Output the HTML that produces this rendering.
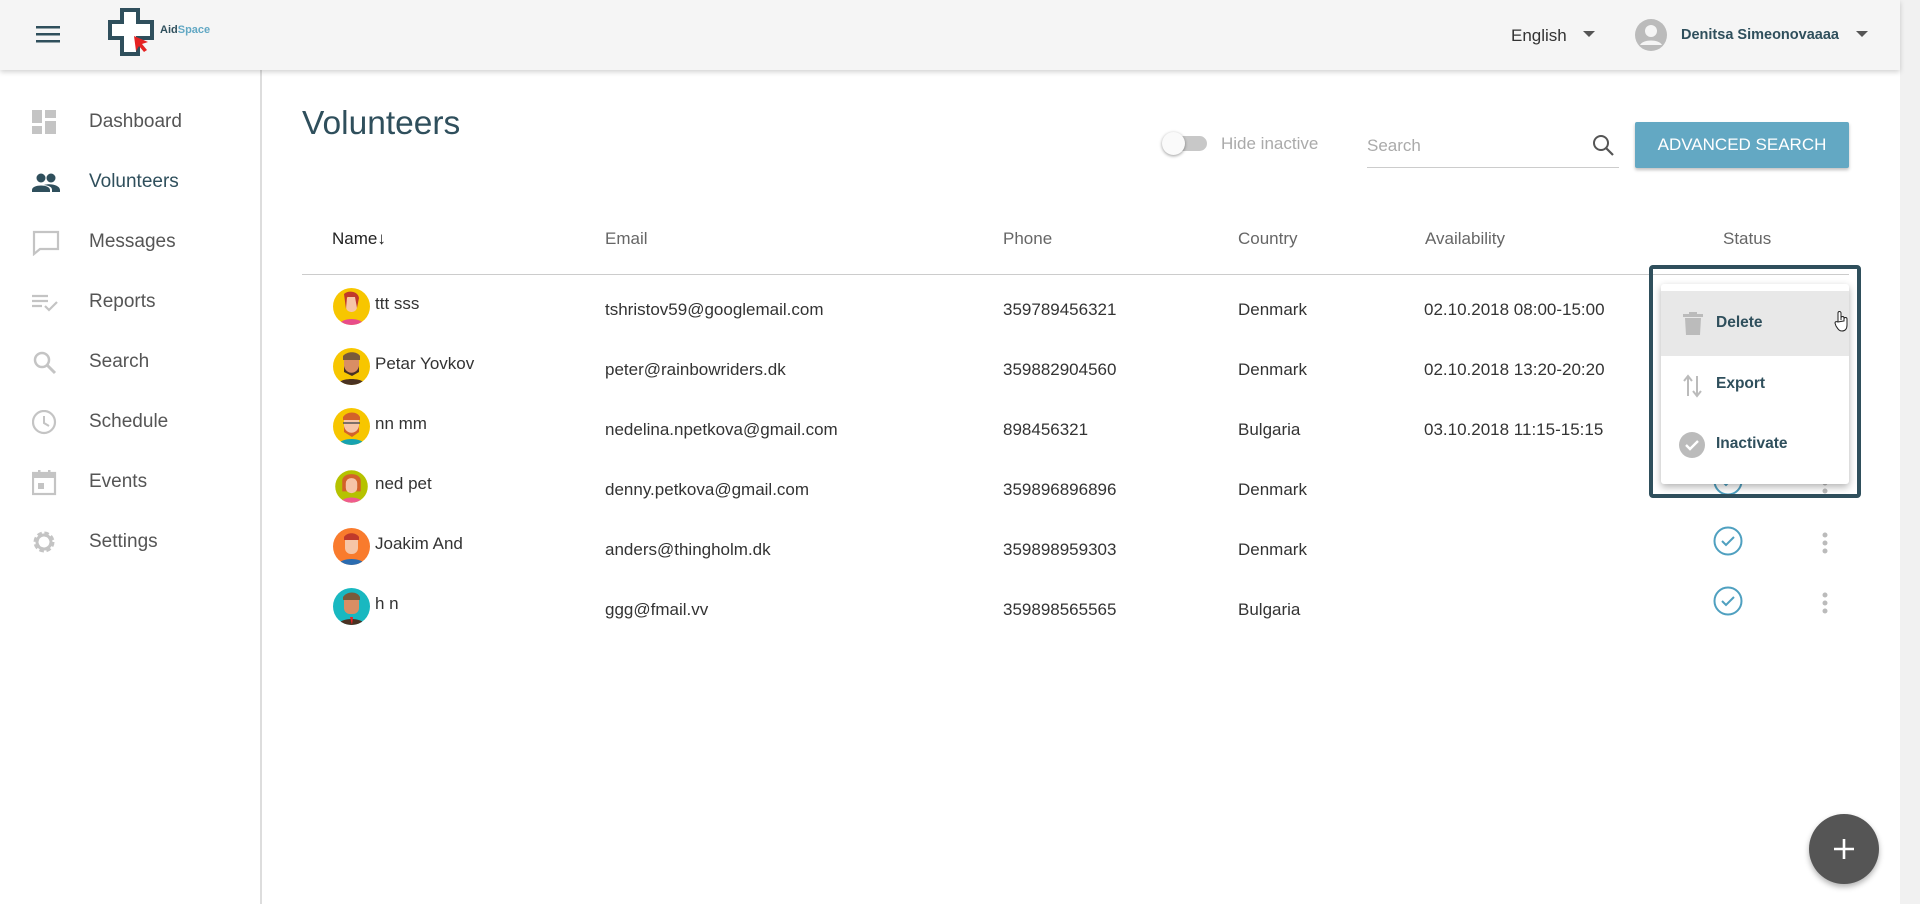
<!DOCTYPE html>
<html><head><meta charset="utf-8"><style>
*{box-sizing:border-box;margin:0;padding:0}
body{width:1920px;height:904px;overflow:hidden;background:#fff;font-family:"Liberation Sans",sans-serif;position:relative;color:#333}
.abs{position:absolute}
.hdr{left:0;top:0;width:1900px;height:70px;background:#f5f5f5;box-shadow:0 2px 5px rgba(0,0,0,.18);z-index:2}
.side{left:0;top:70px;width:262px;height:834px;border-right:2px solid #ddd}
.nav{position:absolute;left:0;width:260px;height:40px;display:flex;align-items:center;font-size:19px;color:#555}
.nav svg{position:absolute;left:32px;top:8px}
.nav span{position:absolute;left:89px}
.th{position:absolute;top:229px;font-size:17px;color:#666}
.row{position:absolute;left:302px;width:1547px;height:60px;font-size:17px;color:#333}
.row div{position:absolute;top:22px}
.av{position:absolute;left:31px!important;top:10px!important;width:37px;height:37px;border-radius:50%;overflow:hidden}
.sb{left:1900px;top:0;width:20px;height:904px;background:#f1f1f1}
</style></head><body>
<div class="abs hdr">
 <svg class="abs" style="left:36px;top:25px" width="24" height="18"><rect y="1" width="24" height="2.5" fill="#2f4f5c"/><rect y="8" width="24" height="2.5" fill="#2f4f5c"/><rect y="15" width="24" height="2.5" fill="#2f4f5c"/></svg>
 <svg class="abs" style="left:108px;top:8px" width="50" height="48"><path d="M14 2h16v12h14v16H30v16H14V30H2V14h12z" fill="#fff" stroke="#2f4f5c" stroke-width="4"/><path d="M26 28l14 6-6 2 5 6-3 2-5-6-3 5z" fill="#e52222"/></svg>
 <div class="abs" style="left:160px;top:24px;font-size:11px;font-weight:bold;color:#2f4f5c">Aid<span style="color:#62a8c4">Space</span></div>
 <div class="abs" style="left:1511px;top:26px;font-size:17px;color:#333">English</div>
 <svg class="abs" style="left:1583px;top:31px" width="12" height="6"><path d="M0 0h12L6 6z" fill="#555"/></svg>
 <svg class="abs" style="left:1634px;top:18px" width="34" height="34"><circle cx="17" cy="17" r="16" fill="#bbb"/><circle cx="17" cy="13" r="6" fill="#f5f5f5"/><path d="M6 27c3-6 19-6 22 0" fill="#f5f5f5"/></svg>
 <div class="abs" style="left:1681px;top:27px;font-size:14.5px;font-weight:bold;color:#2f4f5c">Denitsa Simeonovaaaa</div>
 <svg class="abs" style="left:1856px;top:31px" width="12" height="6"><path d="M0 0h12L6 6z" fill="#555"/></svg>
</div>
<div class="abs side">
 <div class="nav" style="top:32px"><svg width="24" height="24"><path d="M0 0h10v13H0zM13 0h11v8H13zM0 16h10v8H0zM13 11h11v13H13z" fill="#c4c4c4"/></svg><span>Dashboard</span></div>
 <div class="nav" style="top:92px;color:#2f4f5c"><svg width="28" height="24"><circle cx="9" cy="8" r="4.5" fill="#2f4f5c"/><circle cx="19" cy="8" r="4.5" fill="#2f4f5c"/><path d="M0 20c0-6 18-6 18 0v2H0zM12 15c6-2 16 0 16 5v2h-8v-2c0-2-1-4-8-5z" fill="#2f4f5c"/></svg><span>Volunteers</span></div>
 <div class="nav" style="top:152px"><svg width="28" height="26"><path d="M2 2h24v17H8l-6 5z" fill="none" stroke="#c4c4c4" stroke-width="2.2"/></svg><span>Messages</span></div>
 <div class="nav" style="top:212px"><svg width="28" height="24"><path d="M0 6h16M0 11h16M0 16h10" stroke="#c4c4c4" stroke-width="2.2"/><path d="M13 16l4 4 8-8" stroke="#c4c4c4" stroke-width="2.2" fill="none"/></svg><span>Reports</span></div>
 <div class="nav" style="top:272px"><svg width="28" height="26"><circle cx="10" cy="10" r="7" fill="none" stroke="#c4c4c4" stroke-width="2.5"/><path d="M15 15l8 8" stroke="#c4c4c4" stroke-width="3"/></svg><span>Search</span></div>
 <div class="nav" style="top:332px"><svg width="28" height="26"><circle cx="12" cy="12" r="11" fill="none" stroke="#c4c4c4" stroke-width="2.2"/><path d="M12 6v7l5 3" stroke="#c4c4c4" stroke-width="2" fill="none"/></svg><span>Schedule</span></div>
 <div class="nav" style="top:392px"><svg width="28" height="26"><rect x="1" y="3" width="22" height="21" fill="none" stroke="#c4c4c4" stroke-width="2.2"/><rect x="1" y="3" width="22" height="5" fill="#c4c4c4"/><rect x="6" y="0" width="2.5" height="5" fill="#c4c4c4"/><rect x="16" y="0" width="2.5" height="5" fill="#c4c4c4"/><rect x="6" y="13" width="6" height="6" fill="#c4c4c4"/></svg><span>Events</span></div>
 <div class="nav" style="top:452px"><svg width="28" height="26"><circle cx="12" cy="12" r="8" fill="none" stroke="#c4c4c4" stroke-width="5" stroke-dasharray="4 2.3"/><circle cx="12" cy="12" r="7" fill="none" stroke="#c4c4c4" stroke-width="3"/></svg><span>Settings</span></div>
</div>
<div class="abs" style="left:302px;top:105px;font-size:33.5px;color:#2f4f5c">Volunteers</div>
<div class="abs" style="left:1165px;top:136px;width:42px;height:15px;border-radius:8px;background:#c8c8c8"></div>
<div class="abs" style="left:1162px;top:132px;width:23px;height:23px;border-radius:50%;background:#fafafa;box-shadow:0 1px 3px rgba(0,0,0,.4)"></div>
<div class="abs" style="left:1221px;top:134px;font-size:17px;color:#aaa">Hide inactive</div>
<div class="abs" style="left:1367px;top:136px;font-size:17px;color:#aaa">Search</div>
<svg class="abs" style="left:1592px;top:134px" width="24" height="24"><circle cx="9" cy="9" r="7" fill="none" stroke="#555" stroke-width="2"/><path d="M14 14l7 7" stroke="#555" stroke-width="2.2"/></svg>
<div class="abs" style="left:1367px;top:167px;width:252px;height:1px;background:#ccc"></div>
<div class="abs" style="left:1635px;top:122px;width:214px;height:46px;background:#63a8c3;border-radius:2px;box-shadow:0 2px 3px rgba(0,0,0,.25);color:#fff;font-size:17px;text-align:center;line-height:46px">ADVANCED SEARCH</div>
<div class="th" style="left:332px;color:#222">Name&#8595;</div>
<div class="th" style="left:605px">Email</div>
<div class="th" style="left:1003px">Phone</div>
<div class="th" style="left:1238px">Country</div>
<div class="th" style="left:1425px">Availability</div>
<div class="th" style="left:1723px">Status</div>
<div class="abs" style="left:302px;top:274px;width:1547px;height:1px;background:#ccc"></div>

<div class="row" style="top:278px"><span class="av" style="background:#f7c600"><svg width="37" height="37"><rect x="13" y="8" width="11" height="16" rx="5" fill="#f6c5a7"/><path d="M11 6c4-4 14-3 15 4l-2 10-2-11h-8l-1 12z" fill="#c0392b"/><path d="M6 37c2-8 23-8 25 0z" fill="#e84d8a"/></svg></span><div style="left:73px;top:16px">ttt sss</div><div style="left:303px">tshristov59@googlemail.com</div><div style="left:701px">359789456321</div><div style="left:936px">Denmark</div><div style="left:1122px">02.10.2018 08:00-15:00</div></div>
<div class="row" style="top:338px"><span class="av" style="background:#f7c600"><svg width="37" height="37"><rect x="11" y="7" width="15" height="19" rx="6" fill="#d98e64"/><path d="M10 8c4-5 14-5 17 0v4H10z" fill="#7a5a3a"/><path d="M11 18c2 9 13 9 15 0v6l-7 4-8-4z" fill="#4a3222"/><path d="M4 37c2-8 27-8 29 0z" fill="#4a3222"/></svg></span><div style="left:73px;top:16px">Petar Yovkov</div><div style="left:303px">peter@rainbowriders.dk</div><div style="left:701px">359882904560</div><div style="left:936px">Denmark</div><div style="left:1122px">02.10.2018 13:20-20:20</div></div>
<div class="row" style="top:398px"><span class="av" style="background:#f7c600"><svg width="37" height="37"><rect x="11" y="7" width="15" height="19" rx="6" fill="#f6c5a7"/><path d="M10 9c4-6 14-6 17 0v3H10z" fill="#d3622a"/><path d="M11 18c2 9 13 9 15 0v6l-7 5-8-5z" fill="#d3622a"/><path d="M10 15h17" stroke="#555" stroke-width="1.5"/><path d="M5 37c2-8 25-8 27 0z" fill="#17a2b0"/></svg></span><div style="left:73px;top:16px">nn mm</div><div style="left:303px">nedelina.npetkova@gmail.com</div><div style="left:701px">898456321</div><div style="left:936px">Bulgaria</div><div style="left:1122px">03.10.2018 11:15-15:15</div></div>
<div class="row" style="top:458px"><span class="av" style="background:#b5c200;transform:scale(.88)"><svg width="37" height="37"><path d="M8 12c0-10 21-10 21 0v12H8z" fill="#d3622a"/><rect x="12" y="9" width="13" height="17" rx="6" fill="#f6c5a7"/><path d="M6 37c2-8 23-8 25 0z" fill="#ef5b8e"/></svg></span><div style="left:73px;top:16px">ned pet</div><div style="left:303px">denny.petkova@gmail.com</div><div style="left:701px">359896896896</div><div style="left:936px">Denmark</div><div style="left:1411px;top:8px"><svg width="30" height="30"><circle cx="15" cy="15" r="13.5" fill="none" stroke="#4fa0c0" stroke-width="2"/><path d="M9 15l4 4 8-8" fill="none" stroke="#4fa0c0" stroke-width="2"/></svg></div><div style="left:1520px;top:14px"><svg width="6" height="22"><circle cx="3" cy="3" r="2.5" fill="#bbb"/><circle cx="3" cy="11" r="2.5" fill="#bbb"/><circle cx="3" cy="19" r="2.5" fill="#bbb"/></svg></div></div>
<div class="row" style="top:518px"><span class="av" style="background:#f97b2d"><svg width="37" height="37"><rect x="12" y="7" width="13" height="19" rx="6" fill="#f6c5a7"/><path d="M11 9c3-5 12-5 15 0v3H11z" fill="#c0392b"/><path d="M5 37c2-8 25-8 27 0z" fill="#2b6cb0"/></svg></span><div style="left:73px;top:16px">Joakim And</div><div style="left:303px">anders@thingholm.dk</div><div style="left:701px">359898959303</div><div style="left:936px">Denmark</div><div style="left:1411px;top:8px"><svg width="30" height="30"><circle cx="15" cy="15" r="13.5" fill="none" stroke="#4fa0c0" stroke-width="2"/><path d="M9 15l4 4 8-8" fill="none" stroke="#4fa0c0" stroke-width="2"/></svg></div><div style="left:1520px;top:14px"><svg width="6" height="22"><circle cx="3" cy="3" r="2.5" fill="#bbb"/><circle cx="3" cy="11" r="2.5" fill="#bbb"/><circle cx="3" cy="19" r="2.5" fill="#bbb"/></svg></div></div>
<div class="row" style="top:578px"><span class="av" style="background:#19b8c0"><svg width="37" height="37"><rect x="11" y="7" width="15" height="19" rx="6" fill="#d98e64"/><path d="M10 9c4-6 14-6 17 0v3H10z" fill="#7a5a3a"/><path d="M5 37c2-8 25-8 27 0z" fill="#4a3222"/><path d="M17 29h3l-1 8z" fill="#e22"/></svg></span><div style="left:73px;top:16px">h n</div><div style="left:303px">ggg@fmail.vv</div><div style="left:701px">359898565565</div><div style="left:936px">Bulgaria</div><div style="left:1411px;top:8px"><svg width="30" height="30"><circle cx="15" cy="15" r="13.5" fill="none" stroke="#4fa0c0" stroke-width="2"/><path d="M9 15l4 4 8-8" fill="none" stroke="#4fa0c0" stroke-width="2"/></svg></div><div style="left:1520px;top:14px"><svg width="6" height="22"><circle cx="3" cy="3" r="2.5" fill="#bbb"/><circle cx="3" cy="11" r="2.5" fill="#bbb"/><circle cx="3" cy="19" r="2.5" fill="#bbb"/></svg></div></div>

<div class="abs" style="left:1649px;top:265px;width:212px;height:233px;border:4px solid #2f4f5c;border-radius:4px"></div>
<div class="abs" style="left:1661px;top:284px;width:188px;height:200px;background:#fff;border-radius:3px;box-shadow:0 3px 8px rgba(0,0,0,.3)">
 <div class="abs" style="left:0;top:7px;width:188px;height:65px;background:#e8e8e8"></div>
 <svg class="abs" style="left:22px;top:28px" width="20" height="24"><rect x="0" y="2" width="20" height="3" fill="#bbb"/><rect x="6" y="0" width="8" height="3" fill="#bbb"/><path d="M2 6h16l-1 17H3z" fill="#bbb"/></svg>
 <div class="abs" style="left:55px;top:30px;font-size:15.5px;font-weight:bold;color:#2f4f5c">Delete</div>
 <svg class="abs" style="left:1834px;left:173px;top:26px" width="14" height="22"><path d="M4 12V3a1.5 1.5 0 013 0v7M7 10V8a1.5 1.5 0 013 0v3M10 11V9a1.5 1.5 0 013 0v6c0 4-2 6-5 6-3 0-4-2-6-5l-1-3c0-1 1-2 3-1z" fill="#fff" stroke="#222" stroke-width="1"/></svg>
 <svg class="abs" style="left:21px;top:90px" width="22" height="24"><path d="M6 22V3M2 7l4-5 4 5M15 2v19M11 17l4 5 4-5" fill="none" stroke="#bbb" stroke-width="2"/></svg>
 <div class="abs" style="left:55px;top:91px;font-size:15.5px;font-weight:bold;color:#2f4f5c">Export</div>
 <svg class="abs" style="left:18px;top:148px" width="26" height="26"><circle cx="13" cy="13" r="13" fill="#bbb"/><path d="M7 13l4 4 8-8" fill="none" stroke="#fff" stroke-width="2.4"/></svg>
 <div class="abs" style="left:55px;top:151px;font-size:15.5px;font-weight:bold;color:#2f4f5c">Inactivate</div>
</div>
<div class="abs" style="left:1809px;top:814px;width:70px;height:70px;border-radius:50%;background:#555;box-shadow:0 3px 6px rgba(0,0,0,.3)"><svg class="abs" style="left:25px;top:25px" width="20" height="20"><path d="M10 0v20M0 10h20" stroke="#fff" stroke-width="2.6"/></svg></div>
<div class="abs sb"></div>
</body></html>
